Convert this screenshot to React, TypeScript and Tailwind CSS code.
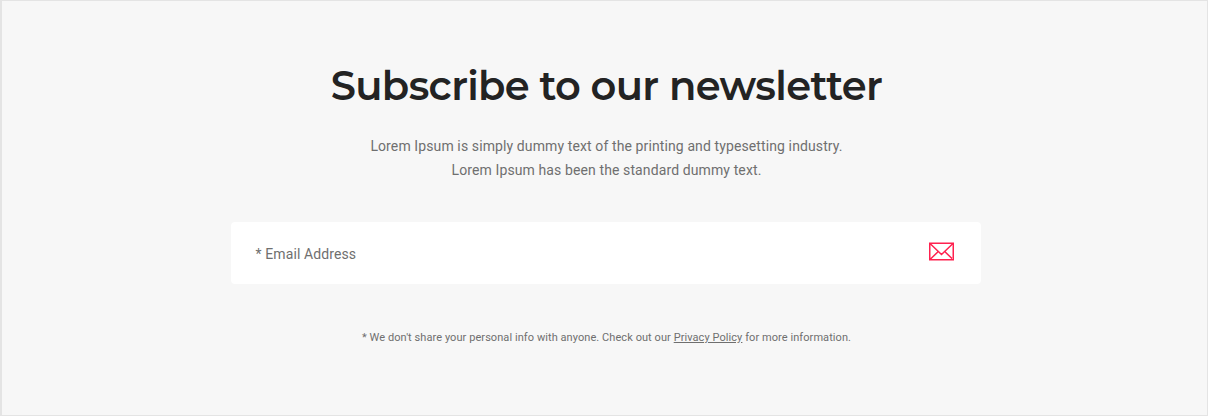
export default function App() {
  return (
    <main className="flex h-[416px] w-full flex-col items-center border border-l-2 border-[#e4e4e4] bg-[#f7f7f7] pl-[2px] font-['Roboto',sans-serif] text-[#6f6f6f]">
      <h1 className="mt-[60px] h-[50px] pl-[2px] whitespace-nowrap font-['Montserrat','Inter',sans-serif] text-[40px] leading-[50px] font-semibold tracking-[-0.65px] text-[#232323]">
        Subscribe to our newsletter
      </h1>
      <p className="mt-[23px] pl-[2px] text-center text-[14px] leading-6 tracking-[0.11px]">
        Lorem Ipsum is simply dummy text of the printing and typesetting industry.
        <br />
        Lorem Ipsum has been the standard dummy text.
      </p>
      <form className="mt-[40px] flex h-[62px] w-[750px] items-center justify-between rounded-[4px] bg-white pr-[27px] pl-[25px]">
        <span className="pt-[2px] text-[14px] tracking-[0.11px]">* Email Address</span>
        <svg className="mb-[3px] h-[19px] w-[25px]" viewBox="0 0 25 19" fill="none" stroke="#ff214f" strokeWidth="1.5">
          <path d="M.75 1.25h23.5v16.5H.75zM1 1.5l11.5 11L24 1.5M1 17.5l8.3-8M24 17.5l-8.3-8" />
        </svg>
      </form>
      <p className="mt-[46px] pl-[2px] text-[11px] leading-4 tracking-[0.07px]">
        * We don't share your personal info with anyone. Check out our{" "}
        <a className="underline">Privacy Policy</a> for more information.
      </p>
    </main>
  );
}
